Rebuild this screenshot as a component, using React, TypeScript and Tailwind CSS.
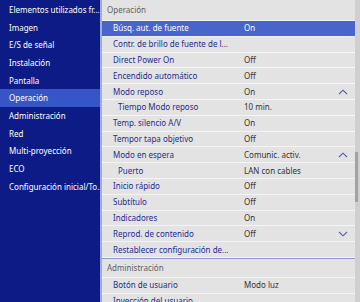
const menu = [
  "Elementos utilizados fr...",
  "Imagen",
  "E/S de señal",
  "Instalación",
  "Pantalla",
  "Operación",
  "Administración",
  "Red",
  "Multi-proyección",
  "ECO",
  "Configuración inicial/To...",
];

type Row = {
  label: string;
  value?: string;
  indent?: boolean;
  active?: boolean;
  chevron?: "up" | "down";
};

const rows: Row[] = [
  { label: "Búsq. aut. de fuente", value: "On", active: true },
  { label: "Contr. de brillo de fuente de l..." },
  { label: "Direct Power On", value: "Off" },
  { label: "Encendido automático", value: "Off" },
  { label: "Modo reposo", value: "On", chevron: "up" },
  { label: "Tiempo Modo reposo", value: "10 min.", indent: true },
  { label: "Temp. silencio A/V", value: "On" },
  { label: "Tempor tapa objetivo", value: "Off" },
  { label: "Modo en espera", value: "Comunic. activ.", chevron: "up" },
  { label: "Puerto", value: "LAN con cables", indent: true },
  { label: "Inicio rápido", value: "Off" },
  { label: "Subtítulo", value: "Off" },
  { label: "Indicadores", value: "On" },
  { label: "Reprod. de contenido", value: "Off", chevron: "down" },
  { label: "Restablecer configuración de..." },
];

function Chevron({ dir }: { dir: "up" | "down" }) {
  return (
    <svg width="10" height="6" viewBox="0 0 10 6" className="mr-[7px]">
      <polyline
        points={dir === "up" ? "1,5 5,1.2 9,5" : "1,1 5,4.8 9,1"}
        fill="none"
        stroke="#4d5cb4"
        strokeWidth="1.1"
      />
    </svg>
  );
}

function SettingRow({ row }: { row: Row }) {
  return (
    <div
      className={
        row.active
          ? "flex h-[15.8px] items-center border-b border-[#eef0fa] bg-[#4964cb] text-white"
          : "flex h-[15.8px] items-center border-b border-[#f4f4f4]"
      }
    >
      <div
        className={
          (row.indent ? "pl-[16px] " : "pl-[11px] ") +
          "w-[142px] shrink-0 whitespace-nowrap " +
          (row.active ? "text-white" : "text-[#1e2b8e]")
        }
      >
        {row.label}
      </div>
      <div className={"flex-1 whitespace-nowrap " + (row.active ? "text-white" : "text-[#333333]")}>
        {row.value}
      </div>
      {row.chevron && <Chevron dir={row.chevron} />}
    </div>
  );
}

export default function App() {
  return (
    <div
      className="flex h-[302px] w-[360px] overflow-hidden text-[8px] leading-normal"
      style={{ fontFamily: '"Noto Sans", "Open Sans", sans-serif' }}
    >
      <div className="w-[100px] shrink-0 bg-[#0d1b87] pt-[1.2px] text-white">
        {menu.map((m) => (
          <div
            key={m}
            className={
              "flex h-[17.67px] items-center whitespace-nowrap pl-[9px] " +
              (m === "Operación" ? "bg-[#3656c8]" : "")
            }
          >
            {m}
          </div>
        ))}
      </div>
      <div className="flex flex-1 border-l-2 border-[#a3aade] bg-[#e3e3e3]">
        <div className="flex-1">
          <div className="flex h-[21px] items-center border-b border-[#f4f4f4] pl-[5px] text-[#5f5f5f]">
            Operación
          </div>
          {rows.map((r) => (
            <SettingRow key={r.label} row={r} />
          ))}
          <div className="h-px bg-[#8f98d6]" />
          <div className="flex h-[19px] items-center border-b border-[#f4f4f4] pl-[5px] text-[#5f5f5f]">
            Administración
          </div>
          <SettingRow row={{ label: "Botón de usuario", value: "Modo luz" }} />
          <SettingRow row={{ label: "Inyección del usuario" }} />
        </div>
        <div className="w-[5px] shrink-0 bg-[#cfcfcf]">
          <div className="mt-[152px] h-[50px] w-[3px] bg-[#a2a2a2]" />
        </div>
      </div>
    </div>
  );
}
